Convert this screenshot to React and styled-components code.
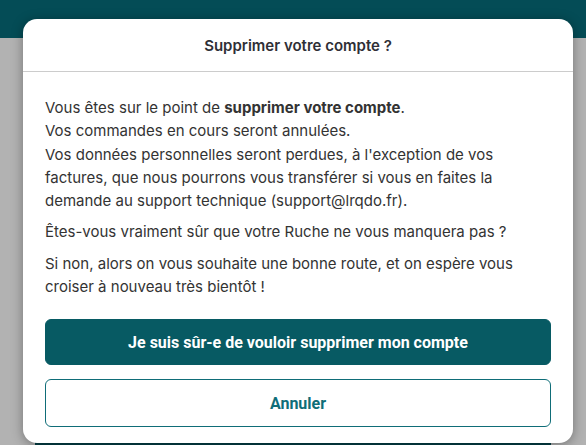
import styled, { createGlobalStyle } from 'styled-components';

const GlobalStyle = createGlobalStyle`
  html, body {
    margin: 0;
    padding: 0;
    height: 100%;
    overflow: hidden;
    background: #ffffff;
    font-family: Inter, "Noto Sans", sans-serif;
  }
  #root {
    height: 100%;
  }
`;

const Page = styled.div`
  position: relative;
  height: 100%;
  display: flex;
  flex-direction: column;
`;

const TopBar = styled.div`
  height: 38px;
  background: #044c56;
  flex-shrink: 0;
  position: relative;
  z-index: 2;
`;

const PageBody = styled.div`
  flex: 1;
  display: flex;
  flex-direction: column;
  justify-content: flex-end;
  padding: 0 35px;
`;

const BackButton = styled.div`
  height: 40px;
  margin-bottom: -38px;
  background: #075a63;
  color: #ffffff;
  font-family: Roboto, sans-serif;
  font-size: 15px;
  display: flex;
  justify-content: center;
  padding-top: 4px;
`;

const Overlay = styled.div`
  position: absolute;
  inset: 38px 0 0 0;
  background: rgba(0, 0, 0, 0.3);
  z-index: 3;
`;

const Modal = styled.div`
  position: absolute;
  top: 19px;
  left: 23px;
  width: 550px;
  background: #ffffff;
  border-radius: 14px;
  box-shadow: 0 2px 12px rgba(0, 0, 0, 0.35);
  z-index: 4;
  display: flex;
  flex-direction: column;
`;

const Header = styled.div`
  height: 52px;
  display: flex;
  align-items: center;
  justify-content: center;
  border-bottom: 1px solid #cccccc;
`;

const Title = styled.h2`
  margin: 0;
  font-family: Inter, sans-serif;
  font-size: 15px;
  font-weight: 600;
  color: #2f2f36;
  padding-top: 1px;
`;

const Content = styled.div`
  padding: 24px 22px 16px;
  display: flex;
  flex-direction: column;
`;

const Text = styled.div`
  display: flex;
  flex-direction: column;
  gap: 8px;
  margin-bottom: 21px;
`;

const Paragraph = styled.p`
  margin: 0;
  font-size: 15px;
  line-height: 23.3px;
  color: #333333;

  strong {
    font-weight: 700;
  }
`;

const Actions = styled.div`
  display: flex;
  flex-direction: column;
  gap: 14px;
`;

const Button = styled.button`
  height: ${p => (p.$outline ? '48px' : '46px')};
  border-radius: 6px;
  font-family: Roboto, sans-serif;
  font-size: 16px;
  font-weight: 700;
  cursor: pointer;
  border: 1px solid ${p => (p.$outline ? '#0f6d78' : '#075a63')};
  background: ${p => (p.$outline ? '#ffffff' : '#075a63')};
  color: ${p => (p.$outline ? '#0f6d78' : '#ffffff')};
`;

export default function App() {
  return (
    <>
      <GlobalStyle />
      <Page>
        <TopBar />
        <PageBody>
          <BackButton>Mon panier</BackButton>
        </PageBody>
        <Overlay />
        <Modal>
          <Header>
            <Title>Supprimer votre compte ?</Title>
          </Header>
          <Content>
            <Text>
              <Paragraph>
                Vous êtes sur le point de <strong>supprimer votre compte</strong>.
                <br />
                Vos commandes en cours seront annulées.
                <br />
                Vos données personnelles seront perdues, à l'exception de vos factures, que nous
                pourrons vous transférer si vous en faites la demande au support technique
                (support@lrqdo.fr).
              </Paragraph>
              <Paragraph>Êtes-vous vraiment sûr que votre Ruche ne vous manquera pas ?</Paragraph>
              <Paragraph>
                Si non, alors on vous souhaite une bonne route, et on espère vous croiser à nouveau
                très bientôt !
              </Paragraph>
            </Text>
            <Actions>
              <Button type="button">Je suis sûr-e de vouloir supprimer mon compte</Button>
              <Button type="button" $outline>
                Annuler
              </Button>
            </Actions>
          </Content>
        </Modal>
      </Page>
    </>
  );
}
